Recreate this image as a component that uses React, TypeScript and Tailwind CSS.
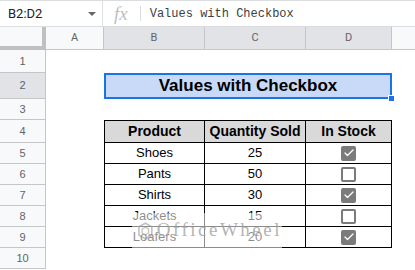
import { Check } from "lucide-react";

const rows = [
  { product: "Shoes", qty: 25, stock: true },
  { product: "Pants", qty: 50, stock: false },
  { product: "Shirts", qty: 30, stock: true },
  { product: "Jackets", qty: 15, stock: false },
  { product: "Loafers", qty: 20, stock: true },
];

function RowHead({ n, active = false }: { n: number; active?: boolean }) {
  return (
    <div
      className={`w-[46px] shrink-0 h-full flex items-center justify-center border-r border-b border-[#c4c7c5] text-[11px] text-[#5f6368] ${
        active ? "bg-[#e1e3e6]" : "bg-[#f8f9fa]"
      }`}
    >
      {n}
    </div>
  );
}

function CheckBox({ on }: { on: boolean }) {
  return on ? (
    <div className="w-[15px] h-[15px] rounded-[2px] bg-[#7b7b7b] flex items-center justify-center">
      <Check className="w-[12px] h-[12px] text-white" strokeWidth={2.5} />
    </div>
  ) : (
    <div className="w-[15px] h-[15px] rounded-[2px] border-2 border-[#7b7b7b] bg-white" />
  );
}

export default function App() {
  return (
    <div className="relative w-[415px] h-[270px] overflow-hidden bg-white font-['Roboto',sans-serif]">
      {/* Formula bar */}
      <div className="h-[27px] flex items-center border-t border-b border-[#dadce0]">
        <div className="w-[103px] h-full flex items-center justify-between pl-[8px] pr-[6px] border-r border-[#e0e0e0]">
          <span className="text-[13px] text-[#202124]">B2:D2</span>
          <span className="w-0 h-0 border-l-[4px] border-r-[4px] border-t-[4px] border-l-transparent border-r-transparent border-t-[#666]" />
        </div>
        <span className="ml-[11px] text-[19px] italic text-[#c0c0c0] font-['Liberation_Serif',serif] leading-none">fx</span>
        <div className="ml-[12px] w-px h-[15px] bg-[#dadce0]" />
        <span className="ml-[9px] text-[12px] text-[#3c4043] font-['Liberation_Mono',monospace]">Values with Checkbox</span>
      </div>

      {/* Column headers */}
      <div className="h-[23px] flex text-[11px] text-[#5f6368]">
        <div className="w-[46px] shrink-0 bg-[#f8f9fa] border-r-[4px] border-b-[4px] border-[#c0c0c0]" />
        <div className="w-[58px] shrink-0 flex items-center justify-center bg-[#f8f9fa] border-r border-b border-[#c4c7c5]">A</div>
        <div className="w-[101px] shrink-0 flex items-center justify-center bg-[#e1e3e6] border-r border-b border-[#c4c7c5]">B</div>
        <div className="w-[101px] shrink-0 flex items-center justify-center bg-[#e1e3e6] border-r border-b border-[#c4c7c5]">C</div>
        <div className="w-[86px] shrink-0 flex items-center justify-center bg-[#e1e3e6] border-r border-b border-[#c4c7c5]">D</div>
        <div className="flex-1 bg-[#f8f9fa] border-b border-[#c4c7c5]" />
      </div>

      <div className="font-['Liberation_Sans',Arial,sans-serif] text-black">
        {/* Row 1 */}
        <div className="h-[23px] flex">
          <RowHead n={1} />
        </div>

        {/* Row 2 - title */}
        <div className="h-[26px] flex">
          <RowHead n={2} active />
          <div className="w-[58px] shrink-0" />
          <div className="relative w-[288px] shrink-0 h-full border-2 border-[#1a73e8] bg-[#c9daf8] flex items-center justify-center text-[17px] font-bold">
            Values with Checkbox
            <div className="absolute -right-[5px] -bottom-[5px] w-[7px] h-[7px] bg-[#1a73e8] border border-white" />
          </div>
        </div>

        {/* Row 3 */}
        <div className="h-[21px] flex">
          <RowHead n={3} />
        </div>

        {/* Row 4 - table header */}
        <div className="h-[23px] flex">
          <RowHead n={4} />
          <div className="w-[58px] shrink-0" />
          <div className="flex h-full bg-[#d9d9d9] border-t border-b border-black text-[14px] font-bold">
            <div className="w-[101px] flex items-center justify-center border-l border-r border-black">Product</div>
            <div className="w-[101px] flex items-center justify-center border-r border-black">Quantity Sold</div>
            <div className="w-[86px] flex items-center justify-center border-r border-black">In Stock</div>
          </div>
        </div>

        {/* Data rows */}
        {rows.map((r, i) => (
          <div key={r.product} className="h-[21px] flex">
            <RowHead n={5 + i} />
            <div className="w-[58px] shrink-0" />
            <div className="flex h-full border-b border-black text-[13px]">
              <div className="w-[101px] flex items-center justify-center border-l border-r border-black">{r.product}</div>
              <div className="w-[101px] flex items-center justify-center border-r border-black">{r.qty}</div>
              <div className="w-[86px] flex items-center justify-center border-r border-black">
                <CheckBox on={r.stock} />
              </div>
            </div>
          </div>
        ))}

        {/* Row 10 */}
        <div className="h-[21px] flex">
          <RowHead n={10} />
        </div>
      </div>

      {/* Watermark */}
      <div className="absolute left-[132px] top-[213px] w-[150px] h-[35px] bg-white/55 flex items-center pl-[5px] gap-[3px] pointer-events-none">
        <svg width="26" height="28" viewBox="0 0 26 28" className="opacity-60">
          <path d="M13 2 L23 7.5 L23 20.5 L13 26 L3 20.5 L3 7.5 Z" fill="none" stroke="#9a9a9a" strokeWidth="2.5" />
          <path d="M13 8 L18 11 L18 17 L13 20 L8 17 L8 11 Z" fill="none" stroke="#9a9a9a" strokeWidth="2" />
        </svg>
        <span className="text-[19px] tracking-[2.5px] text-[#a0a0a0]/80 font-['Liberation_Serif',serif]">OfficeWheel</span>
      </div>
    </div>
  );
}
